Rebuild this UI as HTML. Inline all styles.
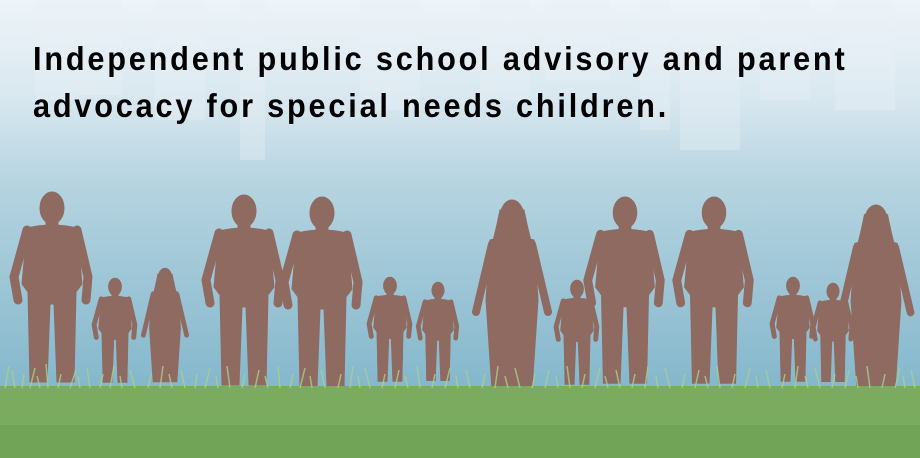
<!DOCTYPE html>
<html><head><meta charset="utf-8"><style>
html,body{margin:0;padding:0}
body{width:920px;height:458px;overflow:hidden;position:relative;background:linear-gradient(#eef4f8 0%,#d8e7ef 22%,#b6d4e0 40%,#9fc7d7 60%,#84b7cc 85%)}
svg{position:absolute;left:0;top:0}
.t{position:absolute;left:33px;top:35px;font-family:"Liberation Sans",Arial,sans-serif;font-weight:bold;font-size:33px;line-height:47px;letter-spacing:3px;color:#000;white-space:nowrap;transform:scaleX(0.93);transform-origin:0 0}
</style></head><body>
<svg width="920" height="458" viewBox="0 0 920 458">
<defs>
<g id="ad">
<ellipse cx="0" cy="16" rx="12" ry="16"/>
<rect x="-6" y="28" width="12" height="10"/>
<path d="M-25,36 Q0,30 25,36 L30,92 L24,100 L22,190 L5,190 L2,112 L-2,112 L-5,190 L-22,190 L-24,100 L-30,92Z"/>
<path d="M-25,38 L-38,85 L-34,108" stroke-width="9" stroke-linecap="round" fill="none"/>
<path d="M25,38 L36,85 L34,108" stroke-width="9" stroke-linecap="round" fill="none"/>
</g>
<g id="wo">
<ellipse cx="0" cy="18" rx="12" ry="18"/>
<path d="M-12,10 Q-18,40 -22,50 L22,50 Q18,40 12,10Z"/>
<path d="M-22,40 Q0,34 22,40 L26,100 L20,190 L-20,190 L-26,100Z"/>
<path d="M-20,44 L-32,95 L-36,112" stroke-width="8" stroke-linecap="round" fill="none"/>
<path d="M20,44 L32,95 L36,112" stroke-width="8" stroke-linecap="round" fill="none"/>
</g>
</defs>
<g fill="#eaf2f7" opacity="0.35">
<rect x="35" y="0" width="45" height="100"/><rect x="62" y="0" width="60" height="95"/><rect x="155" y="0" width="50" height="120"/>
<rect x="240" y="0" width="25" height="160"/><rect x="360" y="0" width="60" height="110"/><rect x="480" y="0" width="50" height="100"/>
<rect x="545" y="0" width="65" height="80"/><rect x="640" y="0" width="30" height="130"/><rect x="680" y="30" width="60" height="120"/>
<rect x="760" y="0" width="50" height="100"/><rect x="835" y="0" width="60" height="110"/>
</g>
<g fill="#8f6a60" stroke="#8f6a60">
<use href="#ad" transform="translate(52,192)"/>
<use href="#ad" transform="translate(244,195)"/>
<use href="#ad" transform="translate(322,197)"/>
<use href="#wo" transform="translate(512,200)"/>
<use href="#ad" transform="translate(625,197) scale(0.98)"/>
<use href="#ad" transform="translate(714,197) scale(0.98)"/>
<use href="#wo" transform="translate(876,205) scale(0.96)"/>
<use href="#ad" transform="translate(115,278) scale(0.55)"/>
<use href="#wo" transform="translate(165,268) scale(0.6)"/>
<use href="#ad" transform="translate(390,277) scale(0.55)"/>
<use href="#ad" transform="translate(438,282) scale(0.52)"/>
<use href="#ad" transform="translate(577,280) scale(0.55)"/>
<use href="#ad" transform="translate(793,277) scale(0.55)"/>
<use href="#ad" transform="translate(833,283) scale(0.52)"/>
</g>
<rect x="0" y="386" width="920" height="72" fill="#7aab5e"/>
<rect x="0" y="425" width="920" height="33" fill="#72a457"/>
<g stroke="#a8d08c" stroke-width="1.5" fill="none" opacity="0.8">
<path d="M5,388 l4,-22 M15,388 l-3,-18 M22,388 l2,-14 M30,388 l5,-20 M40,388 l-3,-12 M48,388 l-2,-24 M58,388 l3,-14 M70,388 l6,-18 M80,388 l-2,-12 M90,388 l-3,-20 M100,388 l3,-14 M110,388 l4,-22 M122,388 l-2,-12 M135,388 l-5,-18 M148,388 l3,-14 M160,388 l3,-22 M172,388 l-3,-14 M185,388 l-4,-18 M195,388 l2,-14 M205,388 l5,-20 M218,388 l-2,-12 M230,388 l-3,-22 M242,388 l3,-14 M255,388 l4,-18 M268,388 l-3,-12 M280,388 l-2,-22 M290,388 l3,-14 M300,388 l5,-20 M312,388 l-2,-12 M325,388 l-4,-18 M338,388 l3,-14 M350,388 l3,-22 M360,388 l-2,-12 M370,388 l-5,-20 M382,388 l3,-14 M395,388 l4,-18 M408,388 l-3,-12 M420,388 l-3,-22 M432,388 l3,-14 M445,388 l5,-20 M458,388 l-2,-12 M470,388 l-4,-18 M482,388 l3,-14 M495,388 l3,-22 M508,388 l-3,-12 M520,388 l-5,-20 M532,388 l3,-14 M545,388 l4,-18 M558,388 l-2,-12 M570,388 l-3,-22 M582,388 l3,-14 M595,388 l5,-20 M608,388 l-3,-12 M620,388 l-4,-18 M632,388 l3,-14 M645,388 l3,-22 M658,388 l-2,-12 M670,388 l-5,-20 M682,388 l3,-14 M695,388 l4,-18 M708,388 l-3,-12 M720,388 l-3,-22 M732,388 l3,-14 M745,388 l5,-20 M758,388 l-2,-12 M770,388 l-4,-18 M782,388 l3,-14 M795,388 l3,-22 M808,388 l-3,-12 M820,388 l-5,-20 M832,388 l3,-14 M845,388 l4,-18 M858,388 l-2,-12 M870,388 l-3,-22 M882,388 l3,-14 M895,388 l5,-20 M905,388 l-2,-12 M915,388 l-4,-18"/>
</g>
</svg>
<div class="t">Independent public school advisory and parent<br>advocacy for special needs children.</div>
</body></html>
